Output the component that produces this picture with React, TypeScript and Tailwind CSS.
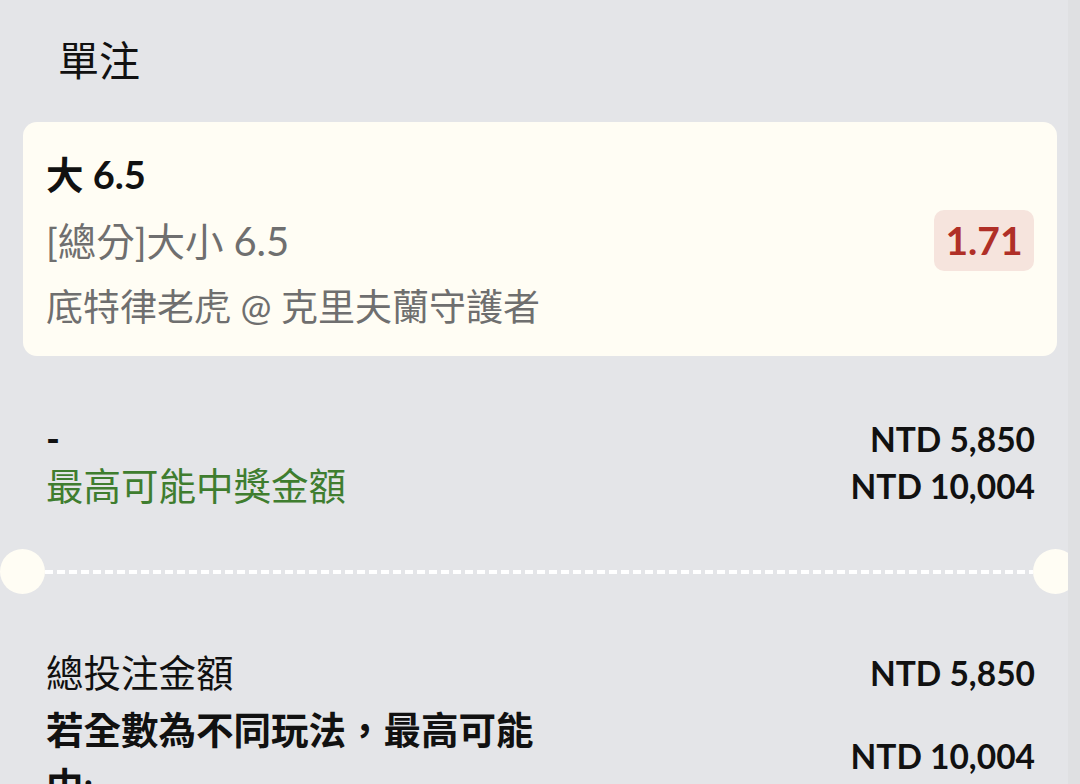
const font = "font-['Lato','Noto_Sans_CJK_TC',sans-serif]";

const Divider = () => (
    <div className="flex items-center h-[45px] pr-[2px]">
        <div className="size-[45px] shrink-0 rounded-full bg-[#fffdf4]" />
        <div className="flex-1 h-[4px] bg-[repeating-linear-gradient(to_right,#ffffff_0_8px,transparent_8px_12px)]" />
        <div className="size-[45px] shrink-0 rounded-full bg-[#fffdf4]" />
    </div>
);

const Amount = ({ value }: { value: string }) => (
    <span className="font-bold text-[33.5px]">{value}</span>
);

export default function App() {
    return (
        <div className={`relative w-[1080px] h-[784px] overflow-hidden bg-[#e4e5e8] text-[#111111] ${font}`}>
            {/* Title */}
            <div className="h-[120px] flex items-center pl-[58px] text-[41px] leading-none">單注</div>

            {/* Selection card */}
            <div className="mt-[2px] mx-[23px] rounded-[14px] bg-[#fffdf4] px-[23px] pt-[19px] pb-[16px] flex items-center justify-between">
                <div className="text-[37.5px] leading-[66px]">
                    <div className="font-bold text-[#111111]">
                        大 <span className="text-[38px]">6.5</span>
                    </div>
                    <div className="text-[38.5px] text-[#6f6f6f]">
                        [總分]大小 <span className="text-[40px]">6.5</span>
                    </div>
                    <div className="text-[37px] text-[#6f6f6f]">底特律老虎 @ 克里夫蘭守護者</div>
                </div>
                <div className="rounded-[10px] bg-[#f6e4dd] h-[61px] w-[100px] flex items-center justify-center text-[39px] font-bold text-[#b02f27]">
                    1.71
                </div>
            </div>

            {/* Stake / payout */}
            <div className="mt-[60px] pl-[46px] pr-[45px] flex flex-col gap-px text-[37.5px] leading-[46px]">
                <div className="flex justify-between items-center">
                    <span className="font-bold">-</span>
                    <Amount value="NTD 5,850" />
                </div>
                <div className="flex justify-between items-center">
                    <span className="text-[#3f7d2f]">最高可能中獎金額</span>
                    <Amount value="NTD 10,004" />
                </div>
            </div>

            <div className="mt-[40px]">
                <Divider />
            </div>

            {/* Totals */}
            <div className="mt-[56px] pl-[46px] pr-[45px] flex flex-col gap-[6px] text-[37.5px]">
                <div className="flex justify-between items-center leading-[46px]">
                    <span>總投注金額</span>
                    <Amount value="NTD 5,850" />
                </div>
                <div className="flex justify-between items-center">
                    <span className="w-[510px] font-bold leading-[56px]">若全數為不同玩法，最高可能中:</span>
                    <span className="leading-[46px] pb-[6px]">
                        <Amount value="NTD 10,004" />
                    </span>
                </div>
            </div>

            {/* Scroll strip */}
            <div className="absolute top-0 right-0 h-full w-[12px] bg-[#dfe0e2]" />
        </div>
    );
}
